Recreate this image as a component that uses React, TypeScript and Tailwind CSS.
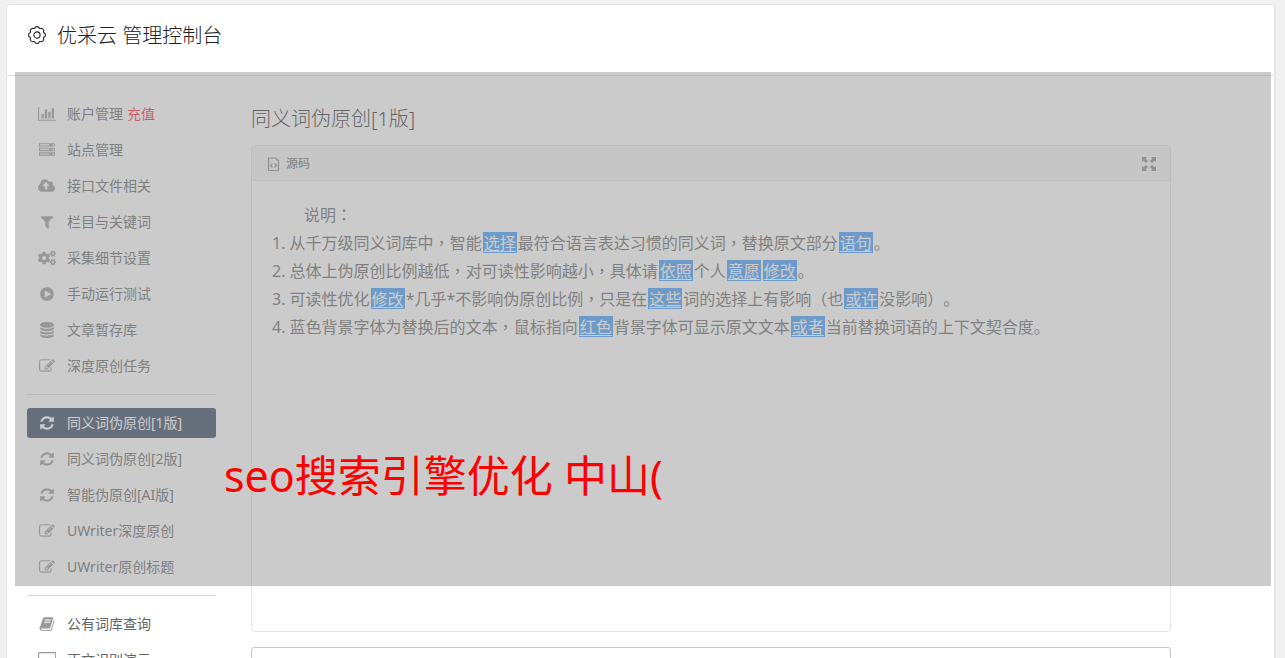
import React from 'react';
import { FaCogs } from 'react-icons/fa';
import { twJoin } from 'tailwind-merge';

const ICONS = {
  chart: {
    viewBox: '0 0 2048 1792',
    d: 'M640 896v512h-256v-512h256zm384-512v1024h-256v-1024h256zm1024 1152v128h-2048v-1536h128v1408h1920zm-640-896v768h-256v-768h256zm384-384v1152h-256v-1152h256z',
  },
  server: {
    viewBox: '0 0 1792 1792',
    d: 'M128 1408h1024v-128h-1024v128zm0-512h1024v-128h-1024v128zm1568 448q0-40-28-68t-68-28-68 28-28 68 28 68 68 28 68-28 28-68zm-1568-960h1024v-128h-1024v128zm1568 448q0-40-28-68t-68-28-68 28-28 68 28 68 68 28 68-28 28-68zm0-512q0-40-28-68t-68-28-68 28-28 68 28 68 68 28 68-28 28-68zm96 832v384h-1792v-384h1792zm0-512v384h-1792v-384h1792zm0-512v384h-1792v-384h1792z',
  },
  upload: {
    viewBox: '0 0 1920 1792',
    d: 'M1280 864q0-14-9-23l-352-352q-9-9-23-9t-23 9l-351 351q-10 12-10 24 0 14 9 23t23 9h224v352q0 13 9.5 22.5t22.5 9.5h192q13 0 22.5-9.5t9.5-22.5v-352h224q13 0 22.5-9.5t9.5-22.5zm640 288q0 159-112.5 271.5t-271.5 112.5h-1088q-185 0-316.5-131.5t-131.5-316.5q0-130 70-240t188-165q-2-30-2-43 0-212 150-362t362-150q156 0 285.5 87t188.5 231q71-62 166-62 106 0 181 75t75 181q0 76-41 138 130 31 213.5 135.5t83.5 238.5z',
  },
  filter: {
    viewBox: '0 0 1792 1792',
    d: 'M1595 295q17 41-14 70l-493 493v742q0 42-39 59-13 5-25 5-27 0-45-19l-256-256q-19-19-19-45v-486l-493-493q-31-29-14-70 17-39 59-39h1280q42 0 59 39z',
  },
  play: {
    viewBox: '0 0 1792 1792',
    d: 'M896 128q209 0 385.5 103t279.5 279.5 103 385.5-103 385.5-279.5 279.5-385.5 103-385.5-103-279.5-279.5-103-385.5 103-385.5 279.5-279.5 385.5-103zm384 823q32-18 32-55t-32-55l-544-320q-31-19-64-1-32 19-32 56v640q0 37 32 56 16 8 32 8 17 0 32-9z',
  },
  database: {
    viewBox: '0 0 1792 1792',
    d: 'M896 768q237 0 443-43t325-127v170q0 69-103 128t-280 93.5-385 34.5-385-34.5-280-93.5-103-128v-170q119 84 325 127t443 43zm0 768q237 0 443-43t325-127v170q0 69-103 128t-280 93.5-385 34.5-385-34.5-280-93.5-103-128v-170q119 84 325 127t443 43zm0-384q237 0 443-43t325-127v170q0 69-103 128t-280 93.5-385 34.5-385-34.5-280-93.5-103-128v-170q119 84 325 127t443 43zm0-1152q208 0 385 34.5t280 93.5 103 128v128q0 69-103 128t-280 93.5-385 34.5-385-34.5-280-93.5-103-128v-128q0-69 103-128t280-93.5 385-34.5z',
  },
  edit: {
    viewBox: '0 0 1792 1792',
    d: 'M888 1184l116-116-152-152-116 116v56h96v96h56zm440-720q-16-16-33 1l-350 350q-17 17-1 33t33-1l350-350q17-17 1-33zm80 594v190q0 119-84.5 203.5t-203.5 84.5h-832q-119 0-203.5-84.5t-84.5-203.5v-832q0-119 84.5-203.5t203.5-84.5h832q63 0 117 25 15 7 18 23 3 17-9 29l-49 49q-14 14-32 8-23-6-45-6h-832q-66 0-113 47t-47 113v832q0 66 47 113t113 47h832q66 0 113-47t47-113v-126q0-13 9-22l64-64q15-15 35-7t20 29zm-96-738l288 288-672 672h-288v-288zm444 132l-92 92-288-288 92-92q28-28 68-28t68 28l152 152q28 28 28 68t-28 68z',
  },
  refresh: {
    viewBox: '0 0 1792 1792',
    d: 'M1639 1056q0 5-1 7-64 268-268 434.5t-478 166.5q-146 0-282.5-55t-243.5-157l-129 129q-19 19-45 19t-45-19-19-45v-448q0-26 19-45t45-19h448q26 0 45 19t19 45-19 45l-137 137q71 66 161 102t187 36q134 0 250-65t186-179q11-17 53-117 8-23 30-23h192q13 0 22.5 9.5t9.5 22.5zm25-800v448q0 26-19 45t-45 19h-448q-26 0-45-19t-19-45 19-45l138-138q-148-137-349-137-134 0-250 65t-186 179q-11 17-53 117-8 23-30 23h-199q-13 0-22.5-9.5t-9.5-22.5v-7q65-268 270-434.5t480-166.5q146 0 284 55.5t245 156.5l130-129q19-19 45-19t45 19 19 45z',
  },
  book: {
    viewBox: '0 0 1792 1792',
    d: 'M1703 478q40 57 18 129l-275 906q-19 64-76.5 107.5t-122.5 43.5h-923q-77 0-148.5-53.5t-99.5-131.5q-24-67-2-127 0-4 3-27t4-37q1-8-3-21.5t-3-19.5q2-11 8-21t16.5-23.5 16.5-23.5q23-38 45-91.5t30-91.5q3-10 .5-30t-.5-28q3-11 17-28t17-23q21-36 42-92t25-90q1-9-2.5-32t.5-28q4-13 22-30.5t22-22.5q19-26 42.5-84.5t27.5-96.5q1-8-3-25.5t-2-26.5q2-8 9-18t18-23 17-21q8-12 16.5-30.5t15-35 16-36 19.5-32 26.5-23.5 36-11.5 47.5 5.5l-1 3q38-9 51-9h761q74 0 114 56t18 130l-274 906q-36 119-71.5 153.5t-128.5 34.5h-869q-27 0-38 15-11 16-1 43 24 70 144 70h923q29 0 56-15.5t35-41.5l300-987q7-22 5-57 38 15 59 43zm-1064 2q-4 13 2 22.5t20 9.5h608q13 0 25.5-9.5t16.5-22.5l21-64q4-13-2-22.5t-20-9.5h-608q-13 0-25.5 9.5t-16.5 22.5zm-83 256q-4 13 2 22.5t20 9.5h608q13 0 25.5-9.5t16.5-22.5l21-64q4-13-2-22.5t-20-9.5h-608q-13 0-25.5 9.5t-16.5 22.5z',
  },
  desktop: {
    viewBox: '0 0 2048 1792',
    d: 'M160 0h1728q66 0 113 47t47 113v1088q0 66-47 113t-113 47h-1728q-66 0-113-47t-47-113v-1088q0-66 47-113t113-47zm0 128q-32 0-32 32v1088q0 32 32 32h1728q32 0 32-32v-1088q0-32-32-32z',
  },
  expand: {
    viewBox: '0 0 16 16',
    d: 'M1 1h5L4.500 2.500 7 5 5 7 2.500 4.500 1 6zM15 1v5L13.500 4.500 11 7 9 5l2.500-2.500L10 1zM1 15v-5l1.500 1.500L5 9l2 2-2.500 2.500L6 15zM15 15h-5l1.500-1.500L9 11l2-2 2.500 2.500L15 10z',
  },
};

type IconName = keyof typeof ICONS;

const Icon = ({ name, className }: { name: IconName; className?: string }) => (
  <svg viewBox={ICONS[name].viewBox} className={twJoin('h-4 w-auto', className)} fill="currentColor" aria-hidden="true">
    <path fillRule={name === 'desktop' ? 'evenodd' : 'nonzero'} d={ICONS[name].d} />
  </svg>
);

const polar = (r: number, deg: number) => {
  const a = (deg * Math.PI) / 180;
  return `${(10 + r * Math.cos(a)).toFixed(2)} ${(10 + r * Math.sin(a)).toFixed(2)}`;
};

// eight rounded teeth
const GEAR_PATH =
  `M${polar(8.2, -11)}` +
  Array.from({ length: 8 }, (_, i) => {
    const t = i * 45;
    return `Q${polar(8.8, t)} ${polar(8.2, t + 11)}Q${polar(6.2, t + 22.5)} ${polar(8.2, t + 34)}`;
  }).join('') +
  'Z';

const GearIcon = () => (
  <svg viewBox="0 0 20 20" className="size-5" fill="none" stroke="currentColor" strokeWidth="1.1" aria-hidden="true">
    <path d={GEAR_PATH} strokeLinejoin="round" />
    <circle cx="10" cy="10" r="3.1" />
  </svg>
);

type NavItem = { icon: IconName | 'cogs'; label: string; extra?: string; active?: boolean };

const NAV: NavItem[][] = [
  [
    { icon: 'chart', label: '账户管理', extra: '充值' },
    { icon: 'server', label: '站点管理' },
    { icon: 'upload', label: '接口文件相关' },
    { icon: 'filter', label: '栏目与关键词' },
    { icon: 'cogs', label: '采集细节设置' },
    { icon: 'play', label: '手动运行测试' },
    { icon: 'database', label: '文章暂存库' },
    { icon: 'edit', label: '深度原创任务' },
  ],
  [
    { icon: 'refresh', label: '同义词伪原创[1版]', active: true },
    { icon: 'refresh', label: '同义词伪原创[2版]' },
    { icon: 'refresh', label: '智能伪原创[AI版]' },
    { icon: 'edit', label: 'UWriter深度原创' },
    { icon: 'edit', label: 'UWriter原创标题' },
  ],
  [
    { icon: 'book', label: '公有词库查询' },
    { icon: 'desktop', label: '正文识别演示' },
  ],
];

const Sidebar = () => (
  <nav className="w-[189px] shrink-0 divide-y divide-[#d8d8d8]">
    {NAV.map((group, i) => (
      <ul key={i} className="flex flex-col gap-[6px] py-[13px] first:pt-0">
        {group.map((item) => (
          <li key={item.label}>
            <a
              href="#"
              className={twJoin(
                'flex h-[30px] items-center rounded-[3px] text-sm',
                item.active ? 'bg-[#374763] text-white' : 'text-[#666]'
              )}
            >
              <span className={twJoin('flex w-10 justify-center', !item.active && 'text-[#999]')}>
                {item.icon === 'cogs' ? <FaCogs size={18} /> : <Icon name={item.icon} />}
              </span>
              {item.label}
              {item.extra && <span className="ml-1 text-[#ff1f2f]">{item.extra}</span>}
            </a>
          </li>
        ))}
      </ul>
    ))}
  </nav>
);

const Word = ({ children }: { children: React.ReactNode }) => (
  <a
    href="#"
    className="mx-px mt-[3px] inline-block h-[21px] bg-[#439dfb] px-px align-top leading-[22px] text-white underline underline-offset-2"
  >
    {children}
  </a>
);

// punctuation centred in its em box
const Mid = ({ children }: { children: React.ReactNode }) => (
  <span lang="zh-TW" className="font-['Noto_Sans_CJK_TC',sans-serif] leading-none">
    {children}
  </span>
);

const Editor = () => (
  <section className="h-[487px] rounded border border-[#e5e5e5]">
    <div className="flex h-[35px] items-center justify-between rounded-t border-b border-[#e5e5e5] bg-[#f4f4f4] pt-[2px] pr-[13px] pl-[14px] text-[#666]">
      <button type="button" className="flex items-center gap-[6px] text-xs">
        <svg viewBox="0 0 14 16" className="h-4 w-[14px]" fill="none" stroke="#888" aria-hidden="true">
          <path d="M2.500 2h7l3 3v9.500h-10z" strokeWidth="1.200" />
          <path d="M6.500 7.500l-2 2 2 2M8.500 7.500l2 2-2 2" strokeWidth="1.200" />
        </svg>
        源码
      </button>
      <button type="button" aria-label="全屏" className="text-[#888]">
        <Icon name="expand" />
      </button>
    </div>
    <div className="px-5 pt-5 text-base leading-7 text-[#696969] [text-spacing-trim:space-all]">
      <p className="indent-8">
        说明<Mid>：</Mid>
      </p>
      <p>
        1. 从千万级同义词库中<Mid>，</Mid>智能<Word>选择</Word>最符合语言表达习惯的同义词<Mid>，</Mid>替换原文部分
        <Word>语句</Word>。
      </p>
      <p>
        2. 总体上伪原创比例越低<Mid>，</Mid>对可读性影响越小<Mid>，</Mid>具体请<Word>依照</Word>个人<Word>意愿</Word>
        <Word>修改</Word>。
      </p>
      <p>
        3. 可读性优化<Word>修改</Word>*几乎*不影响伪原创比例<Mid>，</Mid>只是在<Word>这些</Word>词的选择上有影响（也
        <Word>或许</Word>没影响）。
      </p>
      <p>
        4. 蓝色背景字体为替换后的文本<Mid>，</Mid>鼠标指向<Word>红色</Word>背景字体可显示原文文本<Word>或者</Word>
        当前替换词语的上下文契合度。
      </p>
    </div>
  </section>
);

const App = () => (
  <div className="h-screen overflow-hidden bg-[#f1f1f1] pt-1 pr-[9px] pl-[6px] font-['Noto_Sans','Noto_Sans_CJK_SC',sans-serif]">
    <div className="relative min-h-full rounded border border-r-2 border-[#e5e5e5] bg-white">
      <header className="flex h-[71px] items-center gap-[10px] border-b border-[#e0e0e0] px-5 pb-[10px] text-[#222]">
        <GearIcon />
        <h1 className="pt-[2px] text-xl font-light">优采云 管理控制台</h1>
      </header>
      <div className="flex gap-[35px] pt-[23px] pr-[103px] pl-5">
        <Sidebar />
        <main className="min-w-0 flex-1">
          <h2 className="mt-[5px] mb-[11px] text-xl leading-[30px] font-light text-[#333]">同义词伪原创[1版]</h2>
          <Editor />
          <section className="mt-[15px] h-20 rounded-t-[3px] border border-[#c8c8c8]" />
        </main>
      </div>
      {/* translucent banner lying over the page */}
      <div className="absolute top-[67px] right-[3px] left-2 flex h-[514px] items-end bg-[#979797]/50 px-[209px] pb-[78px]">
        <p className="text-[43px] leading-[64px] whitespace-nowrap text-[#ff0000]">seo搜索引擎优化 中山(</p>
      </div>
    </div>
  </div>
);

export default App;
